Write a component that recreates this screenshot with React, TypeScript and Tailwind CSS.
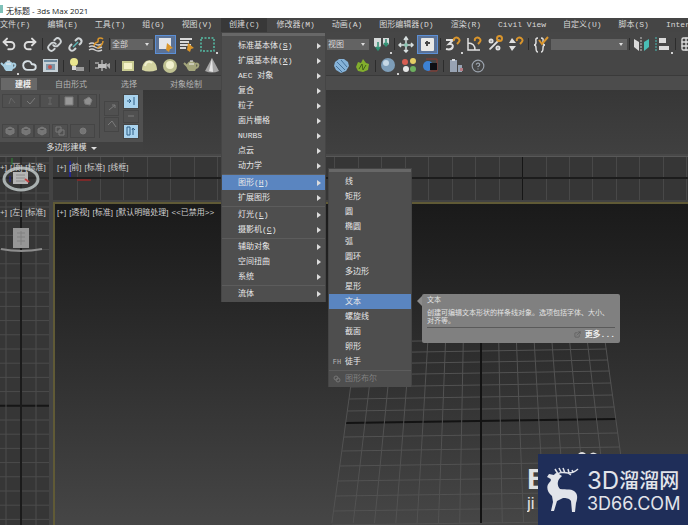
import React from "react";
import clsx from "clsx";
import {
  Cloud,
  CircleHelp,
  ExternalLink,
  Grid3x3,
  Link,
  Percent,
  Redo2,
  Undo2,
} from "lucide-react";

type MenuEntry = {
  text: string;
  hotkey?: string;
  active?: boolean;
  disabled?: boolean;
  prefix?: React.ReactNode;
  children?: React.ReactNode;
};

const topMenus = [
  { text: "文件", hotkey: "(F)" },
  { text: "编辑", hotkey: "(E)" },
  { text: "工具", hotkey: "(T)" },
  { text: "组", hotkey: "(G)" },
  { text: "视图", hotkey: "(V)" },
  { text: "创建", hotkey: "(C)", open: true },
  { text: "修改器", hotkey: "(M)" },
  { text: "动画", hotkey: "(A)" },
  { text: "图形编辑器", hotkey: "(D)" },
  { text: "渲染", hotkey: "(R)" },
  { text: "Civil View" },
  { text: "自定义", hotkey: "(U)" },
  { text: "脚本", hotkey: "(S)" },
  { text: "Inter" },
];

const Label = ({ text, hotkey }: { text: string; hotkey?: string }) => (
  <>
    {text}
    {hotkey && (
      <>
        (<span className="underline">{hotkey}</span>)
      </>
    )}
  </>
);

const MenuItem = ({
  entry,
  submenu,
}: {
  entry: MenuEntry;
  submenu?: boolean;
}) => (
  <li className="relative">
    <button
      type="button"
      disabled={entry.disabled}
      className={clsx(
        "flex h-[15px] w-full items-center text-left",
        entry.active && "bg-[#5a85c0]",
        entry.disabled ? "text-[#828282]" : "text-[#e8e8e8]"
      )}
    >
      <span className="flex w-4 justify-center text-[7px] text-[#b5b5b5]">
        {entry.prefix}
      </span>
      <span className="flex-1">
        <Label text={entry.text} hotkey={entry.hotkey} />
      </span>
      {!submenu && (
        <svg width="4" height="6" className="mr-1">
          <path d="M0 0L4 3L0 6Z" fill="#dcdcdc" />
        </svg>
      )}
    </button>
    {entry.children}
  </li>
);

const Menu = ({
  groups,
  submenu,
}: {
  groups: MenuEntry[][];
  submenu?: boolean;
}) => (
  <div className="border-x border-t border-[#454545] bg-[#4e4e4e] pb-px">
    <div className="mb-[2px] h-[3px] bg-[#676767]" />
    {groups.map((group, index) => (
      <ul
        key={index}
        className={clsx(index > 0 && "mt-px border-t border-[#5c5c5c]")}
      >
        {group.map((entry) => (
          <MenuItem key={entry.text} entry={entry} submenu={submenu} />
        ))}
      </ul>
    ))}
  </div>
);

const Tooltip = () => (
  <div
    className="absolute top-0 left-full z-30 ml-[6px] flex whitespace-normal"
    role="tooltip"
  >
    <svg width="5" height="12" className="mt-px shrink-0">
      <path d="M5 1L0 6L5 11Z" fill="#8a8a8a" />
    </svg>
    <div className="w-[198px] rounded-xs bg-[#808080] px-[5px] py-[2px] text-[7px] leading-[8px] text-[#e2e2e2]">
      <p className="mb-[5px]">文本</p>
      <p className="border-b border-[#5a5a5a] pb-[2px]">
        创建可编辑文本形状的样条线对象。选项包括字体、大小、对齐等。
      </p>
      <p className="flex items-center justify-end gap-1 py-[2px] text-[8px] leading-[9px]">
        <ExternalLink size={7} color="#555" />
        <a href="#more" className="font-bold text-[#f0f0f0]">
          更多...
        </a>
      </p>
    </div>
  </div>
);

const shapeGroups: MenuEntry[][] = [
  [
    { text: "线" },
    { text: "矩形" },
    { text: "圆" },
    { text: "椭圆" },
    { text: "弧" },
    { text: "圆环" },
    { text: "多边形" },
    { text: "星形" },
    { text: "文本", active: true, children: <Tooltip /> },
    { text: "螺旋线" },
    { text: "截面" },
    { text: "卵形" },
    { text: "徒手", prefix: "FH" },
  ],
  [
    {
      text: "图形布尔",
      disabled: true,
      prefix: (
        <svg width="8" height="8" fill="none" stroke="#757575">
          <circle cx="3" cy="3" r="2" />
          <circle cx="5" cy="5" r="2" />
        </svg>
      ),
    },
  ],
];

const ShapesMenu = () => (
  <div className="absolute -top-[7px] left-full z-20 ml-[3px] w-[84px]">
    <Menu groups={shapeGroups} submenu />
  </div>
);

const createGroups: MenuEntry[][] = [
  [
    { text: "标准基本体", hotkey: "S" },
    { text: "扩展基本体", hotkey: "X" },
    { text: "AEC 对象" },
    { text: "复合" },
    { text: "粒子" },
    { text: "面片栅格" },
    { text: "NURBS" },
    { text: "点云" },
    { text: "动力学" },
  ],
  [
    { text: "图形", hotkey: "H", active: true, children: <ShapesMenu /> },
    { text: "扩展图形" },
  ],
  [
    { text: "灯光", hotkey: "L" },
    { text: "摄影机", hotkey: "C" },
  ],
  [{ text: "辅助对象" }, { text: "空间扭曲" }, { text: "系统" }],
  [{ text: "流体" }],
];

const MenuBar = () => (
  <nav className="flex h-[14px] gap-px bg-[#454545] whitespace-nowrap text-[#d8d8d8]">
    {topMenus.map((menu) => (
      <div key={menu.text} className="relative shrink-0">
        <button
          type="button"
          className={clsx(
            "h-full",
            menu.text === "文件" ? "pr-2" : "px-2",
            menu.open && "bg-[#383838]"
          )}
        >
          {menu.text}
          {menu.hotkey}
        </button>
        {menu.open && (
          <div className="absolute top-full left-0 z-10 w-[105px]">
            <Menu groups={createGroups} />
          </div>
        )}
      </div>
    ))}
  </nav>
);

const Tool = ({
  label,
  active,
  corner,
  children,
}: {
  label: string;
  active?: boolean;
  corner?: boolean;
  children: React.ReactNode;
}) => (
  <button
    type="button"
    aria-label={label}
    className={clsx(
      "relative flex h-[19px] w-[21px] shrink-0 items-center justify-center",
      active && "border border-[#5b8fd6] bg-[#5b7296]"
    )}
  >
    {children}
    {corner && (
      <span className="absolute right-0 bottom-0 size-[2px] bg-[#d0d0d0]" />
    )}
  </button>
);

const Sep = ({ wide }: { wide?: boolean }) => (
  <span
    className={clsx(
      "flex h-3 shrink-0 justify-center",
      wide ? "w-[5px]" : "w-1"
    )}
  >
    <span className="w-px bg-[#2c2c2c]" />
  </span>
);

const Dropdown = ({
  label,
  value,
  className,
}: {
  label: string;
  value: string;
  className: string;
}) => (
  <div className={clsx("relative h-[11px] shrink-0 bg-[#636363]", className)}>
    <select
      aria-label={label}
      className="block h-full w-full appearance-none px-px leading-[11px] text-[#d8d8d8]"
    >
      <option>{value}</option>
    </select>
    <svg width="4" height="3" className="absolute top-1 right-1">
      <path d="M0 0H4L2 3Z" fill="#ddd" />
    </svg>
  </div>
);

const Icon = ({ children }: { children: React.ReactNode }) => (
  <svg width="17" height="17" viewBox="0 0 17 17" fill="none">
    {children}
  </svg>
);

/* orange magnet in the corner of the snap toggles */
const Magnet = () => (
  <path
    d="M10 5C9 2 12 1 14 2C17 4 15 6 13 8"
    stroke="#d9952c"
    strokeWidth="2"
  />
);

const Teapot = ({ fill }: { fill: string }) => (
  <Icon>
    <path d="M4 7C6 3 11 3 13 7C14 10 13 12 12 14H6C4 12 3 10 4 7Z" fill={fill} />
    <path d="M5 10L1 6M12 7C17 5 16 11 12 11" stroke={fill} strokeWidth="2" />
    <path d="M7 4H10M6 7H11" stroke="#eee" />
  </Icon>
);

const MainToolbar = () => (
  <div className="flex h-6 items-center overflow-hidden bg-[#464646]">
    <div className="flex w-[221px] shrink-0 items-center">
      <div className="-ml-[2px] flex items-center">
        <Tool label="撤消">
          <Undo2 size={16} color="#dcdcdc" strokeWidth={3} />
        </Tool>
        <Tool label="重做">
          <Redo2 size={16} color="#dcdcdc" strokeWidth={3} />
        </Tool>
      </div>
      <Sep />
      <Tool label="链接">
        <Link size={15} color="#cfd4d6" strokeWidth={3} />
      </Tool>
      <Tool label="取消链接">
        <Icon>
          <path
            d="M8 5L10 3C12 1 16 4 14 7L12 9M9 12L7 14C4 16 1 13 3 10L5 8"
            stroke="#d0d4d6"
            strokeWidth="2"
          />
          <path d="M6 11L11 6" stroke="#5bb5b5" strokeWidth="1.5" />
        </Icon>
      </Tool>
      <Tool label="绑定到空间扭曲">
        <Icon>
          <path
            d="M1 8Q4 6 7 8T14 8M1 11Q4 9 7 11T14 11M1 14Q4 12 7 14T14 14"
            stroke="#d2d2d2"
            strokeWidth="1.5"
          />
          <path
            d="M6 10C7 4 11 8 10 4C10 1 14 2 15 3M9 12C14 10 15 8 15 5"
            stroke="#d9952c"
            strokeWidth="1.5"
          />
        </Icon>
      </Tool>
      <Sep />
      <Dropdown label="选择过滤器" value="全部" className="w-[42px]" />
      <div className="ml-[2px] flex">
        <Tool label="选择对象" active>
          <Icon>
            <rect x="2" y="2" width="12" height="11" fill="#e4e6ea" />
            <path d="M10 7L16 12L13 13L12 16L9 14Z" fill="#d9952c" />
          </Icon>
        </Tool>
        <Tool label="按名称选择">
          <Icon>
            <path
              d="M2 3H14M2 6H11M2 9H13M2 12H8"
              stroke="#d8d8d8"
              strokeWidth="2"
            />
            <path d="M10 7L16 12L13 13L12 16L9 14Z" fill="#d9952c" />
          </Icon>
        </Tool>
        <Tool label="矩形选择区域" corner>
          <Icon>
            <rect
              x="2"
              y="2"
              width="13"
              height="13"
              stroke="#56c0a8"
              strokeWidth="1.5"
              strokeDasharray="2 1.5"
            />
          </Icon>
        </Tool>
      </div>
    </div>
    <div className="ml-[106px] flex items-center">
      <Dropdown label="参考坐标系" value="视图" className="mr-[2px] w-[42px]" />
      <Tool label="轴点中心" corner>
        <Icon>
          <path d="M1 2H8V10L5 13L1 10ZM10 2H16V8L13 10L10 8Z" fill="#d6dada" />
          <path
            d="M5 6V14M3 11L5 14L7 11M13 3V9M11 7L13 10L15 7"
            stroke="#2d8f71"
            strokeWidth="1.5"
          />
        </Icon>
      </Tool>
      <Sep />
      <Tool label="选择并移动">
        <Icon>
          <path
            d="M8 2V16M1 9H15M6 4L8 1L10 4M6 14L8 16L10 14M3 7L1 9L3 11M13 7L15 9L13 11"
            stroke="#d8e0e0"
            strokeWidth="1.5"
          />
          <circle cx="8" cy="9" r="2" fill="#8cc4b2" />
        </Icon>
      </Tool>
      <Tool label="键盘快捷键覆盖" active>
        <Icon>
          <rect x="2" y="2" width="13" height="13" rx="1" fill="#e8e8e6" />
          <path d="M8 5V10M6 7H11" stroke="#474747" strokeWidth="2" />
        </Icon>
      </Tool>
      <Sep />
      <Tool label="捕捉开关" corner>
        <Icon>
          <path
            d="M2 4H9L5 8C11 7 10 15 2 13"
            stroke="#e0e0e0"
            strokeWidth="2"
          />
          <Magnet />
        </Icon>
      </Tool>
      <Tool label="角度捕捉">
        <Icon>
          <path
            d="M3 2V14H15M3 7C8 7 10 10 10 14"
            stroke="#e0e0e0"
            strokeWidth="1.5"
          />
          <Magnet />
        </Icon>
      </Tool>
      <Tool label="百分比捕捉">
        <Percent size={15} color="#e0e0e0" strokeWidth={3} />
        <span className="absolute top-0 right-[2px] size-[7px] rounded-full border-2 border-[#d9952c]" />
      </Tool>
      <Tool label="微调器捕捉">
        <Icon>
          <path d="M2 7H9L5 2ZM2 10H9L5 15Z" fill="#e0e0e0" />
          <Magnet />
        </Icon>
      </Tool>
      <Sep />
      <Tool label="编辑命名选择集">
        <Icon>
          <path
            d="M6 2C3 2 4 4 4 6Q4 9 2 9Q4 9 4 12C4 14 4 16 6 16M9 2C12 2 11 4 11 6Q11 9 13 9Q11 9 11 12C11 14 11 16 9 16"
            stroke="#dcdcdc"
            strokeWidth="1.5"
          />
          <path d="M7 4L10 8L16 1" stroke="#d9952c" strokeWidth="2" />
        </Icon>
      </Tool>
      <Dropdown label="命名选择集" value="" className="w-[76px]" />
      <Sep />
      <Tool label="镜像">
        <Icon>
          <path d="M1 3L6 6V15L1 11Z" fill="#dadada" />
          <path d="M16 3L11 6V15L16 11Z" fill="#49bdb6" />
          <path d="M8 1V16" stroke="#c8c8c8" strokeDasharray="2 1" />
        </Icon>
      </Tool>
      <Tool label="对齐" corner>
        <Icon>
          <path d="M2 1V16" stroke="#49bdb6" strokeDasharray="2 1" />
          <path d="M5 2H12V7H5ZM5 10H15V14H5Z" fill="#dadada" />
        </Icon>
      </Tool>
      <Sep />
      <Tool label="层资源管理器">
        <Grid3x3 size={16} color="#dcdcdc" />
      </Tool>
    </div>
  </div>
);

const ObjectToolbar = () => (
  <div className="flex h-5 items-center overflow-hidden border-b border-[#3a3a3a] bg-[#464646]">
    <div className="flex w-[221px] shrink-0 items-center">
      <div className="-ml-[2px] flex">
        <Tool label="渲染" corner>
          <Teapot fill="#a9cfe2" />
        </Tool>
        <Tool label="云渲染">
          <Cloud size={15} color="#d5dee3" strokeWidth={3} />
        </Tool>
        <Tool label="渲染帧窗口">
          <Icon>
            <rect x="1" y="2" width="15" height="13" fill="#c6d0d6" />
            <path d="M2 4H15" stroke="#6d8ba0" strokeWidth="2" />
            <path d="M4 7H13V13H4Z" fill="#7c96a8" />
            <circle cx="8" cy="10" r="2" fill="#c5524d" />
          </Icon>
        </Tool>
      </div>
      <Sep wide />
      <Tool label="灯光">
        <Icon>
          <circle cx="6" cy="5" r="4" fill="#e9e58e" />
          <path d="M4 9H8V13H4Z" fill="#d8d8d8" />
          <path d="M8 10H16V14H8Z" fill="#9a9a9a" />
        </Icon>
      </Tool>
      <Sep wide />
      <Tool label="摄影机">
        <Icon>
          <path
            d="M1 6H5M1 11H5M8 3V14M12 6V12"
            stroke="#a8a8a8"
            strokeWidth="1.5"
          />
          <path d="M4 7H12V11H4Z" fill="#bebebe" />
          <path d="M12 8L16 6V12Z" fill="#a8a8a8" />
        </Icon>
      </Tool>
      <Sep wide />
      <Tool label="平面">
        <Icon>
          <rect x="2" y="4" width="12" height="10" fill="#c9cb92" />
          <rect x="4" y="6" width="8" height="6" fill="#f3f1c8" />
        </Icon>
      </Tool>
      <Tool label="穹顶">
        <Icon>
          <path d="M1 13C1 0 16 0 16 13Q8 16 1 13Z" fill="#d3d3a0" />
          <path d="M4 9C5 4 9 4 11 6" stroke="#f0efcf" strokeWidth="2" />
        </Icon>
      </Tool>
      <Tool label="球体">
        <Icon>
          <circle cx="8" cy="9" r="7" fill="#bfc191" />
          <circle cx="8" cy="8" r="4" fill="#f2f1cf" />
        </Icon>
      </Tool>
      <Tool label="茶壶">
        <Teapot fill="#a3a57b" />
      </Tool>
      <Tool label="圆锥体">
        <Icon>
          <path d="M8 1L15 14Q8 17 1 14Z" fill="#a5a5a5" />
          <path d="M8 1L9 15L5 14Z" fill="#e4e4e4" />
        </Icon>
      </Tool>
    </div>
    <div className="ml-[110px] flex items-center">
      <Tool label="流体">
        <Icon>
          <path
            d="M2 5L6 2H11L15 5L16 9L13 14L8 16L3 13L1 9Z"
            fill="#85b2d8"
          />
          <path d="M4 5L12 13M8 3L14 10M3 9L9 15" stroke="#44719a" />
        </Icon>
      </Tool>
      <Tool label="植被">
        <Icon>
          <path d="M2 10L4 5L7 6L9 2L12 6L15 7L14 13L9 15L4 14Z" fill="#82ae2d" />
          <path d="M5 12L8 7L9 13L12 8" stroke="#415f1c" />
        </Icon>
      </Tool>
      <Sep wide />
      <Tool label="材质编辑器" corner>
        <Icon>
          <circle cx="8" cy="8" r="7" fill="#7d9db8" />
          <circle cx="6" cy="6" r="3" fill="#c5d8e6" />
        </Icon>
      </Tool>
      <Tool label="材质库">
        <Icon>
          <circle cx="4" cy="5" r="3" fill="#d65d52" />
          <circle cx="12" cy="4" r="3" fill="#e4ce65" />
          <circle cx="5" cy="12" r="3" fill="#e6e6e6" />
          <circle cx="12" cy="12" r="3" fill="#6db05f" />
        </Icon>
      </Tool>
      <Tool label="渲染设置">
        <Icon>
          <path d="M4 2H15V14H6" stroke="#8f3a31" />
          <circle cx="6" cy="9" r="5" fill="#3c82d4" />
          <rect x="8" y="6" width="7" height="7" fill="#0d0f14" />
        </Icon>
      </Tool>
      <Sep wide />
      <Tool label="资源">
        <Icon>
          <path d="M2 3H9V15H2ZM10 8H14V15H10Z" fill="#98a3b3" />
          <path d="M4 2H7V4H4Z" fill="#d5d9de" />
          <path d="M12 11H15V14H12Z" fill="#b37a83" />
        </Icon>
      </Tool>
      <Tool label="帮助">
        <CircleHelp size={14} color="#9ba3ad" />
      </Tool>
    </div>
  </div>
);

const RibbonButton = ({
  className,
  children,
}: {
  className: string;
  children?: React.ReactNode;
}) => (
  <button
    type="button"
    aria-label="多边形工具"
    className={clsx(
      "flex items-center justify-center border border-[#454545]",
      className
    )}
  >
    <svg width="10" height="10" fill="none" stroke="#7b7b7b">
      {children}
    </svg>
  </button>
);

const cube = (
  <path d="M1 3L5 1L9 3V7L5 9L1 7ZM5 5V9M1 3L5 5L9 3" fill="#757575" />
);

const Ribbon = () => (
  <section>
    <div
      role="tablist"
      className="flex h-[14px] items-end bg-[#4c4c4c] text-[#b5b5b5]"
    >
      <button
        role="tab"
        aria-selected="true"
        className="mr-[18px] ml-px h-3 w-9 bg-[#686868] pl-2 font-bold text-[#eee]"
      >
        建模
      </button>
      <button role="tab" aria-selected="false" className="mr-[34px] h-3">
        自由形式
      </button>
      <button role="tab" aria-selected="false" className="mr-[33px] h-3">
        选择
      </button>
      <button role="tab" aria-selected="false" className="h-3">
        对象绘制
      </button>
    </div>
    <div className="flex h-16 bg-linear-to-b from-[#373737] to-[#404040]">
      <div className="flex w-[143px] flex-col bg-[#505050]">
        <div className="flex flex-1">
          <div className="my-1 flex w-[100px] flex-col justify-between border-r border-[#434343] pl-[2px]">
            <div className="flex">
              <RibbonButton className="h-[14px] w-[19px]">
                <path d="M2 8L4 2L8 7" stroke="#666" />
              </RibbonButton>
              <RibbonButton className="h-[14px] w-[19px]">
                <path d="M1 5L4 8L9 2" />
              </RibbonButton>
              <RibbonButton className="h-[14px] w-[19px]">
                <path d="M5 1V9M3 2H7M3 8H7" stroke="#666" />
              </RibbonButton>
              <RibbonButton className="h-[14px] w-[19px]">
                <path d="M1 1H9V9H1Z" fill="#999" />
              </RibbonButton>
              <RibbonButton className="h-[14px] w-[19px]">
                <path d="M1 4L6 1L9 4L7 9L2 8Z" fill="#909090" />
              </RibbonButton>
            </div>
            <div className="flex">
              <RibbonButton className="h-[14px] w-4">{cube}</RibbonButton>
              <RibbonButton className="h-[14px] w-4">{cube}</RibbonButton>
              <RibbonButton className="mr-[2px] h-[14px] w-4">
                {cube}
              </RibbonButton>
              <RibbonButton className="mr-[2px] h-[14px] w-4">
                <path d="M1 1H6V6H1ZM4 4H9V9H4Z" />
              </RibbonButton>
              <RibbonButton className="h-[14px] w-[25px]">
                <circle cx="5" cy="5" r="3" fill="#757575" />
              </RibbonButton>
            </div>
          </div>
          <div className="ml-1 flex flex-col justify-center gap-px">
            <RibbonButton className="size-[15px]">
              <path d="M2 7L8 2M5 2H8V5" />
            </RibbonButton>
            <RibbonButton className="size-[15px]">
              <path d="M1 6L5 2L9 8" />
            </RibbonButton>
          </div>
          <div className="ml-1 flex flex-col justify-center gap-px">
            <RibbonButton className="h-[15px] w-4 bg-[#a9d3ee]">
              <path d="M1 5H5M3 3L5 5L3 7M8 1V9" stroke="#2f5f85" />
            </RibbonButton>
            <RibbonButton className="h-[13px] w-4">
              <path d="M2 5H8" />
            </RibbonButton>
            <RibbonButton className="h-[15px] w-4 bg-[#a9d3ee]">
              <path d="M1 1H4V9H1ZM7 3V9M6 4L7 2L9 4" stroke="#2f5f85" />
            </RibbonButton>
          </div>
        </div>
        <button
          type="button"
          className="flex h-3 items-center justify-center gap-1 bg-[#404040] text-[#e2e2e2]"
        >
          多边形建模
          <svg width="6" height="3">
            <path d="M0 0H6L3 3Z" fill="#ddd" />
          </svg>
        </button>
      </div>
    </div>
  </section>
);

const range = (from: number, to: number) =>
  Array.from({ length: to - from + 1 }, (_, i) => from + i);

const ViewLabel = ({
  parts,
  className,
}: {
  parts: string[];
  className: string;
}) => (
  <p
    className={clsx(
      "absolute flex gap-[3px] font-['Liberation_Sans','Noto_Sans_CJK_SC',sans-serif] whitespace-nowrap text-[#cfcfcf]",
      className
    )}
  >
    {parts.map((part) => (
      <span key={part}>{part}</span>
    ))}
  </p>
);

const TopView = () => (
  <div className="relative overflow-hidden bg-[#363636]">
    <svg className="block h-full w-full" fill="none">
      <path d="M6 0V50M36 0V50M0 6H60M0 36H60" stroke="#4c4c4c" />
      <path d="M21 0V50M0 21H60" stroke="#1f1f1f" />
      <ellipse cx="21" cy="22" rx="17" ry="11" stroke="#a9b0b0" strokeWidth="3" />
      <path d="M12 1V8" stroke="#2c8a32" />
      <path d="M10 19V25" stroke="#24249a" />
      <rect x="13" y="15" width="15" height="12" fill="#b5b5b5" />
      <path d="M16 18H25M16 21H25M16 24H25" stroke="#8c8c8c" />
      <path d="M25 22L29 25" stroke="#c04444" strokeWidth="2" />
    </svg>
    <ViewLabel parts={["+]", "[顶]", "[标准]"]} className="top-1 left-0" />
  </div>
);

const FrontView = () => (
  <div className="relative overflow-hidden bg-[#363636]">
    <svg className="block h-full w-full" shapeRendering="crispEdges">
      {range(0, 60).map((i) => (
        <line
          key={i}
          x1={24 + i * 23.45}
          x2={24 + i * 23.45}
          y1="0"
          y2="50"
          stroke={i === 19 ? "#161616" : "#484848"}
        />
      ))}
      <line x1="0" x2="100%" y1="21" y2="21" stroke="#1c1c1c" strokeWidth="2" />
      <path d="M17 4V20" stroke="#26268e" strokeWidth="2" />
      <path d="M24 23H38" stroke="#7a2a2a" strokeWidth="2" />
    </svg>
    <ViewLabel
      parts={["[+]", "[前]", "[标准]", "[线框]"]}
      className="top-1 left-1"
    />
  </div>
);

const LeftView = () => (
  <div className="relative overflow-hidden bg-[#363636]">
    <svg className="block h-full w-full">
      {range(0, 80).map((i) => (
        <line
          key={i}
          x1="0"
          x2="100%"
          y1={5 + i * 14.2}
          y2={5 + i * 14.2}
          stroke={i === 14 ? "#161616" : "#4c4c4c"}
          strokeWidth={i === 14 ? 2 : 1}
        />
      ))}
      <path d="M6 0V2000M36 0V2000" stroke="#4c4c4c" />
      <path d="M21 0V2000" stroke="#1b1b1b" strokeWidth="2" />
      <rect x="13" y="26" width="16" height="20" fill="#969696" />
      <path d="M17 31H25M17 35H25M17 39H25M21 29V43" stroke="#808080" />
      <path
        d="M1 47Q21 51 42 47"
        fill="none"
        stroke="#8d8d8d"
        strokeWidth="2"
      />
    </svg>
    <ViewLabel parts={["+]", "[左]", "[标准]"]} className="top-1 left-0" />
  </div>
);

/* ground plane rows, measured from the top of the viewport */
const rows = [
  136, 147, 158, 169, 181, 193, 205, 217, 231, 245, 260, 275, 290, 305, 319,
];

const PerspectiveView = () => (
  <div className="relative border-t-2 border-l-2 border-[#605a36] bg-linear-to-b from-[#1a1a1a] to-[#464646]">
    <svg className="block h-full w-full">
      {rows.map((y) => {
        const half = 124 + ((y - 136) / 183) * 25;
        return (
          <line
            key={y}
            x1={426 - half}
            x2={426 + half}
            y1={y + 2}
            y2={y - 2}
            stroke={y === 217 ? "#131313" : "#525252"}
            strokeWidth={y === 217 ? 2 : 1}
          />
        );
      })}
      {range(-7, 7).map((i) => (
        <line
          key={i}
          x1={426 + i * 17.7}
          x2={426 + i * 21.3}
          y1="136"
          y2="319"
          stroke={i === 0 ? "#131313" : "#525252"}
          strokeWidth={i === 0 ? 2 : 1}
        />
      ))}
    </svg>
    <ViewLabel
      parts={["[+]", "[透视]", "[标准]", "[默认明暗处理]", "<<已禁用>>"]}
      className="top-[2px] left-[2px]"
    />
  </div>
);

const Watermark = () => (
  <div className="absolute right-0 bottom-0 flex items-end">
    <div className="w-[11px] overflow-hidden pb-2 font-['Liberation_Sans',sans-serif] text-[#e0e0e0]">
      <p className="text-[30px] leading-[24px] font-bold">B</p>
      <p className="text-[17px] leading-[26px]">ji</p>
    </div>
    <div className="relative flex h-[71px] w-[150px] items-center bg-[#1f2e59] pl-2">
      <svg
        className="absolute -top-[2px] left-10"
        width="20"
        height="2"
        fill="#e0e0e0"
      >
        <path d="M0 2Q4 -2 8 2ZM12 2Q15 -1 19 2Z" />
      </svg>
      <svg width="36" height="46" viewBox="0 0 36 46" fill="none">
        <path
          d="M3 7L8 8C9 6 11 5 13 7L16 9L14 11C11 14 11 19 14 22C20 23 27 21 30 26C32 29 31 33 30 36L29 45H26L25 34C23 31 20 31 17 31L11 34L8 44H5L7 35L6 29C1 25 0 19 3 16C6 13 5 12 3 11L1 10Z"
          fill="#e2e4ea"
        />
        <path
          d="M12 7C14 4 17 6 22 6C27 6 30 4 32 2M12 7L9 2M15 5L13 1M19 6L17 1M23 6L22 2M27 5L26 3M22 6L25 8"
          stroke="#e2e4ea"
          strokeWidth="1.5"
        />
      </svg>
      <div className="ml-[5px] whitespace-nowrap text-[#e2e4ea]">
        <p className="flex h-7 items-center font-['Inter','Noto_Sans_CJK_SC',sans-serif] text-[20px] leading-7 font-medium">
          <span className="text-[24px] font-normal">3D</span>溜溜网
        </p>
        <p className="font-['Inter',sans-serif] text-[18px] leading-[18px]">
          3D66.COM
        </p>
      </div>
    </div>
  </div>
);

const App = () => {
  return (
    <div className="relative flex h-screen flex-col overflow-hidden bg-[#484848] font-['Liberation_Mono','Noto_Sans_CJK_SC',monospace] text-[8px] leading-[14px]">
      <header className="flex h-[18px] items-center gap-[3px] bg-white font-['Open_Sans','Noto_Sans_CJK_SC',sans-serif] text-[#222]">
        <span className="h-2 w-[3px] bg-[#7fc0b8]" />
        <h1 className="pt-[3px]">无标题 - 3ds Max 2021</h1>
      </header>
      <MenuBar />
      <MainToolbar />
      <ObjectToolbar />
      <Ribbon />
      <main className="mt-[2px] grid min-h-0 flex-1 grid-cols-[49px_1fr] grid-rows-[43px_1fr] gap-x-1 gap-y-[2px] border-t border-[#585858] bg-[#434343]">
        <TopView />
        <FrontView />
        <LeftView />
        <PerspectiveView />
      </main>
      <Watermark />
    </div>
  );
};

export default App;
